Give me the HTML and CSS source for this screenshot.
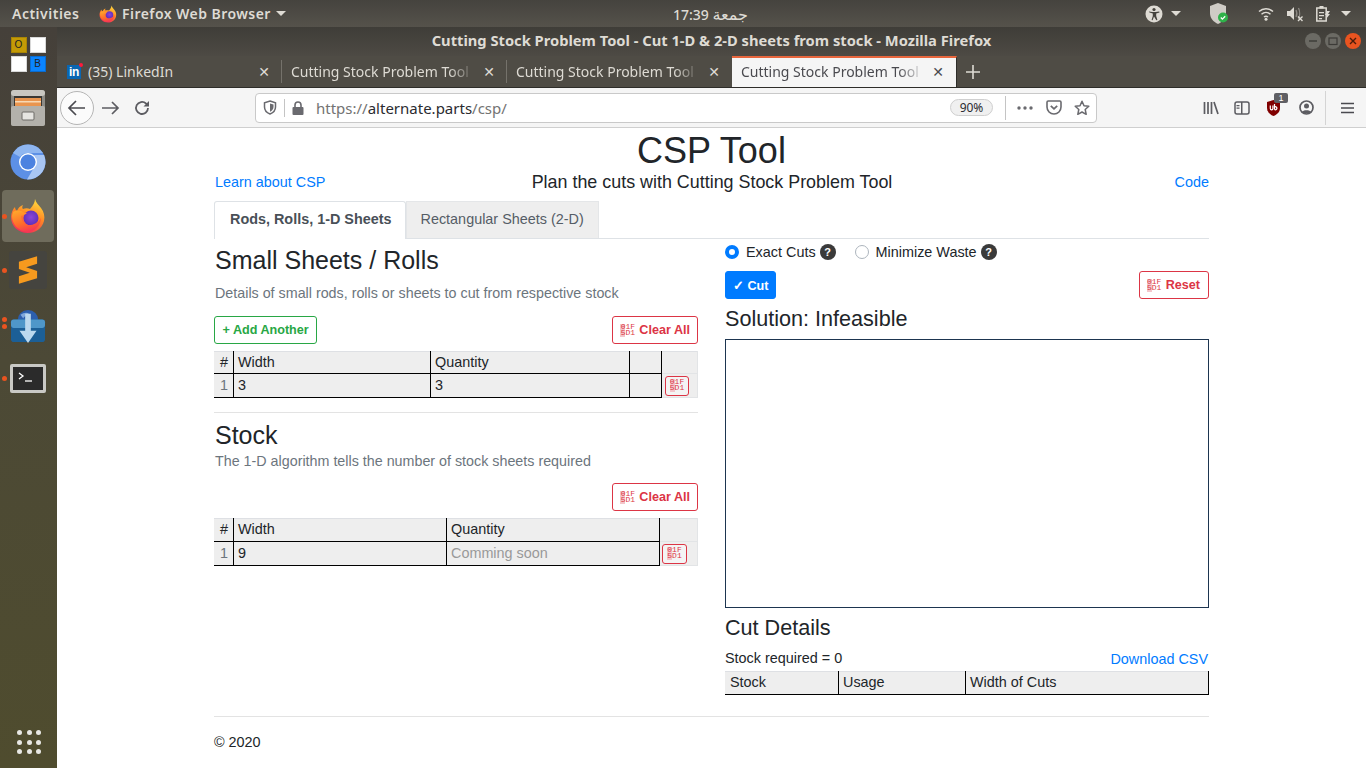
FILE: index.html
```html
<!DOCTYPE html>
<html lang="en">
<head>
  <meta charset="UTF-8" />
  <title>CSP Tool</title>
  <link rel="stylesheet" href="styles.css">
</head>
<body>
  <svg class="defs" width="0" height="0">
    <defs>
      <linearGradient id="foxOuter" x1="0.7" y1="0" x2="0.3" y2="1">
        <stop offset="0" stop-color="#ffdc3e"/>
        <stop offset="0.45" stop-color="#ff8a24"/>
        <stop offset="1" stop-color="#f0285a"/>
      </linearGradient>
      <linearGradient id="foxHead" x1="0.2" y1="0" x2="0.6" y2="1">
        <stop offset="0" stop-color="#ffa62b"/>
        <stop offset="0.6" stop-color="#ff6a2a"/>
        <stop offset="1" stop-color="#f5315a"/>
      </linearGradient>
      <radialGradient id="foxInner" cx="0.5" cy="0.45" r="0.6">
        <stop offset="0" stop-color="#8a45d8"/>
        <stop offset="1" stop-color="#5a2db5"/>
      </radialGradient>
      <symbol id="firefox" viewBox="0 0 36 36">
        <path fill="url(#foxOuter)" d="M25 1c1 4 4 6 6 9 3 4 4 8 3 13-2 8-9 12-16 12C8 35 1 28 1 19c0-4 2-8 4-10 0 2 1 3 2 4 1-3 3-5 6-6-1 2-1 3 0 4 2-1 5-1 7 0 3-3 5-7 5-10z"/>
        <circle cx="21" cy="20" r="7.500" fill="url(#foxInner)"/>
        <path fill="url(#foxHead)" d="M3 14c3-2 7-2 10 0 1 1 3 1 4 1-2 2-5 2-6 3 0 3 2 7 6 9 5 1 11-2 14-7 0 8-7 14-14 14C8 33 2 26 2 18c0-1 1-3 1-4z"/>
      </symbol>
    </defs>
  </svg>

  <header class="topbar">
    <div class="topbar-left">
      <span class="activities">Activities</span>
      <svg class="top-fox" width="18" height="18"><use href="#firefox"/></svg>
      <span class="app-name">Firefox Web Browser</span>
      <span class="caret"></span>
    </div>
    <div class="clock">17:39 <span class="clock-day">جمعة</span></div>
    <div class="topbar-right">
      <svg class="tray-a11y" width="18" height="18" viewBox="0 0 18 18">
        <circle cx="9" cy="9" r="8.500" fill="#dedbd4"/>
        <circle cx="9" cy="4.500" r="1.600" fill="#45433d"/>
        <path fill="#45433d" d="M3.800 6.400l3.400.7h3.600l3.400-.7.3 1-3.300 1v2.500l1.200 4-1 .3L9 11.500l-1.400 3.700-1-.3 1.200-4V8.400l-3.300-1z"/>
      </svg>
      <span class="caret tray-caret1"></span>
      <svg class="tray-shield" width="20" height="24" viewBox="0 0 20 24">
        <path fill="#cfccc6" d="M9 1l8 3v7c0 6-4 9-8 11-4-2-8-5-8-11V4z"/>
        <circle cx="14" cy="15.500" r="5" fill="#2fb24a"/>
        <path fill="none" stroke="#fff" stroke-width="1.300" d="M11.800 15.500l1.600 1.600 2.800-2.800"/>
      </svg>
      <svg class="tray-wifi" width="16" height="14" viewBox="0 0 16 14">
        <path fill="none" stroke="#dedbd4" stroke-width="1.500" d="M1 4.500c4-3.600 10-3.600 14 0M3.500 7.300c2.600-2.300 6.400-2.300 9 0M6 10c1.200-1 2.800-1 4 0"/>
        <circle cx="8" cy="12.300" r="1.500" fill="#dedbd4"/>
      </svg>
      <svg class="tray-vol" width="18" height="16" viewBox="0 0 18 16">
        <path fill="#dedbd4" d="M1 5h3l4-4v13L4 10H1z"/>
        <path fill="none" stroke="#8d8a84" stroke-width="1.300" d="M10 4c1 2 1 5 0 7M12.500 2c1.500 3 1.500 8 0 11"/>
        <path fill="none" stroke="#dedbd4" stroke-width="1.400" d="M12 10.500l4.500 4.500M16.500 10.500L12 15"/>
      </svg>
      <svg class="tray-power" width="16" height="18" viewBox="0 0 16 18">
        <path fill="none" stroke="#dedbd4" stroke-width="1.500" d="M1.800 3h9.400v13H1.800z"/>
        <path fill="#dedbd4" d="M4.500 1h4v2.500h-4zM4 7h5v1.300H4zM4 10h5v1.300H4zM4 13h3v1.300H4z"/>
        <path fill="#dedbd4" d="M12 6l3 0-2 3h2l-4 5 1-4H10z"/>
      </svg>
      <span class="caret tray-caret2"></span>
    </div>
  </header>

  <div class="desktop">
    <aside class="dock">
      <div class="dock-item">
        <div class="ob-grid">
          <span class="ob-cell ob-yellow">O</span>
          <span class="ob-cell"></span>
          <span class="ob-cell"></span>
          <span class="ob-cell ob-blue">B</span>
        </div>
      </div>
      <div class="dock-item">
        <svg width="34" height="36" viewBox="0 0 34 36">
          <rect x="0" y="0" width="34" height="36" rx="3" fill="#8d8b85"/>
          <rect x="0" y="0" width="34" height="6" rx="3" fill="#c9c7c1"/>
          <rect x="3" y="6" width="28" height="10" fill="#3a3834"/>
          <rect x="4" y="8" width="26" height="8" fill="#e9954f"/>
          <rect x="4" y="11" width="26" height="1.500" fill="#f7d9b5"/>
          <rect x="0" y="16" width="34" height="20" rx="2" fill="#b3b1ab"/>
          <rect x="11" y="22" width="12" height="8" rx="1" fill="#e6e5e1" stroke="#6d6b66"/>
        </svg>
      </div>
      <div class="dock-item">
        <svg width="36" height="36" viewBox="0 0 36 36">
          <circle cx="18" cy="18" r="17.500" fill="#5d90e6"/>
          <path fill="#8fb6f0" d="M3 9a17.500 17.500 0 0 1 30 0H18a9 9 0 0 0-8 4z"/>
          <path fill="#a9c6f3" d="M34 11a17.500 17.500 0 0 1-17 24.500l7-12a9 9 0 0 0 0-12.500z"/>
          <circle cx="18" cy="18" r="9" fill="#fff"/>
          <circle cx="18" cy="18" r="7.600" fill="#4c82e0"/>
        </svg>
      </div>
      <div class="dock-item dock-active">
        <span class="run-dot"></span>
        <svg width="36" height="36"><use href="#firefox"/></svg>
      </div>
      <div class="dock-item">
        <span class="run-dot"></span>
        <div class="sublime">
          <svg width="20" height="28" viewBox="0 0 22 30">
            <path fill="#f79a1e" d="M21 0v8L9 12l12 4v8L1 30v-8l12-4L1 14V6z"/>
          </svg>
        </div>
      </div>
      <div class="dock-item">
        <span class="run-dot run-dot-top"></span>
        <span class="run-dot run-dot-low"></span>
        <svg class="dl-icon" width="36" height="34" viewBox="0 0 38 36">
          <circle cx="19" cy="11" r="11" fill="#2c5fae"/>
          <path fill="#7fa8dc" d="M11 5c3-2 7-3 9-1-1 2-5 2-6 5z"/>
          <rect x="1" y="10" width="36" height="24" rx="3" fill="#1c5f96"/>
          <rect x="1" y="10" width="36" height="9" rx="3" fill="#4f97c9"/>
          <path fill="#bcd9ee" d="M16 4h6v18h6l-9 13-9-13h6z"/>
        </svg>
      </div>
      <div class="dock-item">
        <span class="run-dot"></span>
        <div class="term">
          <div class="term-screen">
            <svg width="20" height="12" viewBox="0 0 20 12">
              <path fill="none" stroke="#fff" stroke-width="1.300" d="M1 1l4 3-4 3"/>
              <path stroke="#fff" stroke-width="1.300" d="M7 9h7"/>
            </svg>
          </div>
        </div>
      </div>
      <div class="apps-grid">
        <i></i><i></i><i></i><i></i><i></i><i></i><i></i><i></i><i></i>
      </div>
    </aside>

    <div class="window">
      <div class="titlebar">
        <span class="title">Cutting Stock Problem Tool - Cut 1-D &amp; 2-D sheets from stock - Mozilla Firefox</span>
        <div class="win-controls">
          <span class="win-btn"><svg width="10" height="10" viewBox="0 0 10 10"><path stroke="#3c3b37" stroke-width="1.400" d="M1 5h8"/></svg></span>
          <span class="win-btn"><svg width="10" height="10" viewBox="0 0 10 10"><rect x="1" y="2" width="8" height="6.500" fill="none" stroke="#3c3b37" stroke-width="1.200"/></svg></span>
          <span class="win-btn win-close"><svg width="10" height="10" viewBox="0 0 10 10"><path stroke="#4a1c0a" stroke-width="1.400" d="M2 2l6 6M8 2L2 8"/></svg></span>
        </div>
      </div>

      <div class="tabbar">
        <div class="tab">
          <span class="favicon">in</span>
          <span class="tab-label">(35) LinkedIn</span>
          <span class="tab-x">✕</span>
        </div>
        <div class="tab">
          <span class="tab-label tab-fade">Cutting Stock Problem Tool</span>
          <span class="tab-x">✕</span>
        </div>
        <div class="tab">
          <span class="tab-label tab-fade">Cutting Stock Problem Tool</span>
          <span class="tab-x">✕</span>
        </div>
        <div class="tab tab-active">
          <span class="tab-label tab-fade">Cutting Stock Problem Tool</span>
          <span class="tab-x">✕</span>
        </div>
        <svg class="new-tab" width="16" height="16" viewBox="0 0 16 16"><path stroke="#dedbd4" stroke-width="1.600" d="M8 1v14M1 8h14"/></svg>
      </div>

      <div class="navbar">
        <span class="back-btn">
          <svg width="20" height="18" viewBox="0 0 20 18"><path fill="none" stroke="#4a4a4f" stroke-width="1.700" d="M18 9H2M9 2L2 9l7 7"/></svg>
        </span>
        <svg class="nav-forward" width="18" height="16" viewBox="0 0 18 16"><path fill="none" stroke="#5c5c61" stroke-width="1.700" d="M0 8h16M10 2l6 6-6 6"/></svg>
        <svg class="nav-reload" width="16" height="16" viewBox="0 0 16 16"><path fill="none" stroke="#5c5c61" stroke-width="1.800" d="M14 8a6 6 0 1 1-2-4.500L14 5"/><path fill="#5c5c61" d="M15 1v5.500H9.500z"/></svg>
        <div class="urlbar">
          <svg class="url-shield" width="14" height="15" viewBox="0 0 14 15"><path fill="none" stroke="#6a6a6f" stroke-width="1.500" d="M7 1l5.500 1.800V7c0 3.500-2.500 5.800-5.500 7C4 12.800 1.500 10.500 1.500 7V2.800z"/><path fill="#6a6a6f" d="M7 3.500l3.500 1V7c0 2.300-1.500 3.700-3.500 4.800z"/></svg>
          <span class="url-sep"></span>
          <svg class="url-lock" width="12" height="14" viewBox="0 0 12 14"><path fill="none" stroke="#6a6a6f" stroke-width="1.600" d="M3 6.500V4a3 3 0 0 1 6 0v2.500"/><rect x="0.500" y="6" width="11" height="8" rx="1" fill="#6a6a6f"/></svg>
          <span class="url-text"><span class="url-dim">https://</span>alternate.parts<span class="url-dim">/csp/</span></span>
          <span class="zoom-pill">90%</span>
          <span class="url-sep url-sep-right"></span>
          <svg class="url-dots" width="16" height="4" viewBox="0 0 16 4"><circle cx="2" cy="2" r="1.700" fill="#6a6a6f"/><circle cx="8" cy="2" r="1.700" fill="#6a6a6f"/><circle cx="14" cy="2" r="1.700" fill="#6a6a6f"/></svg>
          <svg class="url-pocket" width="16" height="15" viewBox="0 0 16 15"><path fill="none" stroke="#6a6a6f" stroke-width="1.600" d="M2.200 1h11.600c.7 0 1.200.5 1.200 1.200V7a7 7 0 0 1-14 0V2.200C1 1.500 1.500 1 2.200 1z"/><path fill="none" stroke="#6a6a6f" stroke-width="1.800" d="M4.800 5.800L8 8.800l3.200-3"/></svg>
          <svg class="url-star" width="16" height="16" viewBox="0 0 16 16"><path fill="none" stroke="#6a6a6f" stroke-width="1.500" stroke-linejoin="round" d="M8 1.300l2 4.500 4.800.5-3.600 3.200 1 4.800L8 12l-4.200 2.300 1-4.800L1.200 6.300 6 5.800z"/></svg>
        </div>
        <div class="nav-tools">
          <svg class="tool-lib" width="16" height="14" viewBox="0 0 16 14"><path stroke="#5c5c61" stroke-width="1.700" fill="none" d="M1.500 1v12M5 1v12M8.500 1v12M11 1l4 12"/></svg>
          <svg class="tool-side" width="16" height="14" viewBox="0 0 16 14"><rect x="1" y="1" width="14" height="12" rx="2" fill="none" stroke="#5c5c61" stroke-width="1.500"/><path fill="#5c5c61" d="M7 1h1.500v12H7zM2.500 4h3v1.200h-3zM2.500 6.500h3v1.200h-3z"/></svg>
          <span class="ublock">
            <svg width="15" height="16" viewBox="0 0 15 16"><path fill="#800000" d="M7.500 0L14 2v6c0 4-3 6.500-6.500 8C4 14.500 1 12 1 8V2z"/><path fill="none" stroke="#fff" stroke-width="1.200" d="M4.300 5.500v3a1.300 1.300 0 0 0 2.600 0v-3M8.500 4v5.500M8.500 7a1.500 1.500 0 1 1 0 2.500"/></svg>
            <span class="ublock-badge">1</span>
          </span>
          <svg class="tool-acct" width="15" height="15" viewBox="0 0 15 15"><circle cx="7.500" cy="7.500" r="6.500" fill="none" stroke="#5c5c61" stroke-width="1.700"/><circle cx="7.500" cy="6" r="2.500" fill="#5c5c61"/><path fill="#5c5c61" d="M3 12c1-2.500 8-2.500 9 0-2 2-7 2-9 0z"/></svg>
          <span class="tool-sep"></span>
          <svg class="tool-menu" width="13" height="12" viewBox="0 0 13 12"><path stroke="#4a4a4f" stroke-width="1.700" d="M0 1.500h13M0 6h13M0 10.500h13"/></svg>
        </div>
      </div>

      <main class="page">
        <h1 class="page-title">CSP Tool</h1>
        <div class="lead-row">
          <a class="link" href="#">Learn about CSP</a>
          <span class="lead">Plan the cuts with Cutting Stock Problem Tool</span>
          <a class="link link-end" href="#">Code</a>
        </div>

        <nav class="tabs">
          <span class="page-tab page-tab-active">Rods, Rolls, 1-D Sheets</span>
          <span class="page-tab">Rectangular Sheets (2-D)</span>
        </nav>

        <div class="columns">
          <section class="col-left">
            <h3 class="sec-title">Small Sheets / Rolls</h3>
            <p class="muted muted-first">Details of small rods, rolls or sheets to cut from respective stock</p>
            <div class="btn-row">
              <button class="btn btn-green">+ Add Another</button>
              <button class="btn btn-red"><span class="tofu">01F<br>5D1</span>Clear All</button>
            </div>
            <table class="grid grid-small">
              <tr>
                <th class="c-num">#</th><th class="c-w1">Width</th><th class="c-q1">Quantity</th><th class="c-e1"></th><td class="c-del"></td>
              </tr>
              <tr>
                <td class="c-num num-dim">1</td><td>3</td><td>3</td><td></td>
                <td class="c-del"><button class="btn-del"><span class="tofu">01F<br>5D1</span></button></td>
              </tr>
            </table>
            <hr class="rule">
            <h3 class="sec-title stock-title">Stock</h3>
            <p class="muted">The 1-D algorithm tells the number of stock sheets required</p>
            <div class="btn-row btn-row-end">
              <button class="btn btn-red"><span class="tofu">01F<br>5D1</span>Clear All</button>
            </div>
            <table class="grid grid-stock">
              <tr>
                <th class="c-num">#</th><th class="c-w2">Width</th><th class="c-q2">Quantity</th><td class="c-del2"></td>
              </tr>
              <tr>
                <td class="c-num num-dim">1</td><td>9</td><td class="soon">Comming soon</td>
                <td class="c-del2"><button class="btn-del"><span class="tofu">01F<br>5D1</span></button></td>
              </tr>
            </table>
          </section>

          <section class="col-right">
            <div class="modes">
              <label class="mode"><span class="radio radio-on"></span>Exact Cuts<span class="help">?</span></label>
              <label class="mode"><span class="radio"></span>Minimize Waste<span class="help">?</span></label>
            </div>
            <div class="btn-row btn-row-cut">
              <button class="btn btn-blue">✓ Cut</button>
              <button class="btn btn-red"><span class="tofu">01F<br>5D1</span>Reset</button>
            </div>
            <h4 class="sub-title">Solution: Infeasible</h4>
            <div class="solution"></div>
            <h4 class="sub-title details-title">Cut Details</h4>
            <div class="stock-row">
              <span>Stock required = 0</span>
              <a class="link" href="#">Download CSV</a>
            </div>
            <table class="grid grid-cuts">
              <tr><th class="c-s">Stock</th><th class="c-u">Usage</th><th>Width of Cuts</th></tr>
            </table>
          </section>
        </div>

        <footer class="footer">© 2020</footer>
      </main>
    </div>
  </div>
</body>
</html>
```

FILE: styles.css
```css
* {
  box-sizing: border-box;
}

html, body {
  margin: 0;
  height: 768px;
  overflow: hidden;
}

body {
  font-family: "Liberation Sans", Arial, sans-serif;
  font-size: 14.4px;
  color: #212529;
  background: #fff;
}

.defs {
  display: block;
  height: 0;
}

/* gnome top bar */
.topbar {
  height: 27px;
  display: grid;
  grid-template-columns: 1fr auto 1fr;
  align-items: center;
  background: linear-gradient(to bottom, #45433e, #55524b);
  color: #dedbd4;
  font-family: "Noto Sans", sans-serif;
  font-size: 14px;
  font-weight: 600;
}

.topbar-left {
  display: flex;
  align-items: center;
  padding-left: 12px;
}

.activities {
  width: 87px;
  letter-spacing: 0.5px;
}

.top-fox {
  margin-right: 5px;
}

.app-name {
  letter-spacing: 0.45px;
}

.caret {
  display: inline-block;
  width: 0;
  height: 0;
  border-left: 5px solid transparent;
  border-right: 5px solid transparent;
  border-top: 5px solid #dedbd4;
  margin-left: 5px;
}

.clock {
  font-family: "Noto Sans", "DejaVu Sans", sans-serif;
  font-size: 14px;
  font-weight: 500;
  margin-left: 55px;
}

.clock-day {
  font-size: 16px;
}

.topbar-right {
  display: flex;
  align-items: center;
  justify-content: flex-end;
  padding-right: 15px;
}

.tray-caret1 {
  margin-left: 8px;
}

.tray-shield {
  margin-left: 28px;
}

.tray-wifi {
  margin-left: 29px;
}

.tray-vol {
  margin-left: 12px;
}

.tray-power {
  margin-left: 11px;
}

.tray-caret2 {
  margin-left: 10px;
}

/* desktop */
.desktop {
  display: flex;
  height: 741px;
}

.dock {
  width: 57px;
  flex: none;
  display: flex;
  flex-direction: column;
  background: linear-gradient(to bottom, #45403a, #4c4936 45%, #4f4c2e);
}

.dock-item {
  position: relative;
  height: 54px;
  flex: none;
  display: flex;
  align-items: center;
  justify-content: center;
  padding-right: 1px;
}

.dock-active::before {
  content: "";
  position: absolute;
  left: 2px;
  top: 1px;
  width: 52px;
  height: 52px;
  border-radius: 4px;
  background: #6f6c5c;
}

.dock-active svg {
  position: relative;
}

.run-dot {
  position: absolute;
  left: 2px;
  top: 25px;
  width: 5px;
  height: 5px;
  border-radius: 50%;
  background: #e95420;
}

.run-dot-top {
  top: 20px;
}

.run-dot-low {
  top: 27px;
}

.dl-icon {
  margin-top: 6px;
}

.ob-grid {
  display: grid;
  grid-template-columns: 16px 16px;
  grid-template-rows: 16px 16px;
  gap: 3px;
}

.ob-cell {
  background: #fff;
  border: 1px solid #d8d8d8;
  font-size: 10px;
  line-height: 14px;
  text-align: center;
  color: #222;
}

.ob-yellow {
  background: #c49a06;
  border-color: #a98505;
}

.ob-blue {
  background: #0a84ff;
  border-color: #0a6cd0;
}

.sublime {
  width: 38px;
  height: 38px;
  border-radius: 3px;
  background: #45443f;
  display: flex;
  align-items: center;
  justify-content: center;
}

.term {
  width: 36px;
  height: 29px;
  padding: 3px;
  background: #c9c9c5;
  border-radius: 2px;
}

.term-screen {
  height: 100%;
  background: #2b2b2b;
  padding: 5px 0 0 5px;
}

.term-screen svg {
  display: block;
}

.apps-grid {
  margin: auto 0 14px 17px;
  width: 23px;
  display: grid;
  grid-template-columns: repeat(3, 5px);
  gap: 4.500px;
}

.apps-grid i {
  width: 5px;
  height: 5px;
  border-radius: 50%;
  background: #e8e8e4;
}

/* firefox window */
.window {
  flex: 1;
  min-width: 0;
  display: flex;
  flex-direction: column;
}

.titlebar {
  position: relative;
  height: 29px;
  padding-bottom: 3px;
  display: flex;
  align-items: center;
  justify-content: center;
  background: linear-gradient(to bottom, #3f3d38, #4d4a44);
  color: #dedbd4;
  font-family: "Noto Sans", sans-serif;
  font-size: 14.7px;
  font-weight: 700;
}

.win-controls {
  position: absolute;
  right: 5px;
  top: 6px;
  display: flex;
  gap: 4px;
}

.win-btn {
  width: 16px;
  height: 16px;
  border-radius: 50%;
  background: #6b6a64;
  display: flex;
  align-items: center;
  justify-content: center;
}

.win-close {
  background: #e95420;
}

.tabbar {
  height: 31px;
  display: flex;
  align-items: stretch;
  background: #4f4c45;
  color: #dedbd4;
  font-family: "Noto Sans", sans-serif;
  font-size: 14px;
}

.tab {
  width: 225px;
  flex: none;
  display: flex;
  align-items: center;
  padding: 0 10px 0 9px;
  position: relative;
}

.tab + .tab::before {
  content: "";
  position: absolute;
  left: -1px;
  top: 4px;
  bottom: 4px;
  width: 1px;
  background: #75726b;
}

.tab-active {
  background: #f5f5f5;
  color: #4a4a4f;
  border-top: 2px solid #e8663d;
  border-right: 1px solid #2e2d29;
  padding-bottom: 2px;
}

.tab-active::before {
  display: none;
}

.tab-label {
  flex: 1;
  min-width: 0;
  white-space: nowrap;
  overflow: hidden;
}

.tab-fade {
  -webkit-mask-image: linear-gradient(to right, #000 86%, transparent);
  mask-image: linear-gradient(to right, #000 86%, transparent);
}

.tab-x {
  margin-left: 6px;
  font-family: "DejaVu Sans", sans-serif;
  font-size: 14px;
  width: 16px;
  text-align: center;
}

.favicon {
  position: relative;
  width: 14px;
  height: 14px;
  margin: 0 7px 0 1px;
  background: #0a66b2;
  color: #fff;
  font-family: "Liberation Sans", sans-serif;
  font-size: 12px;
  font-weight: 700;
  line-height: 15px;
  text-align: center;
  letter-spacing: -0.3px;
}

.favicon::after {
  content: "";
  position: absolute;
  right: -2px;
  top: -2px;
  width: 4px;
  height: 4px;
  border-radius: 50%;
  background: #ff1a3c;
}

.new-tab {
  align-self: center;
  margin-left: 8px;
}

.navbar {
  height: 41px;
  display: flex;
  align-items: center;
  background: #f5f5f5;
  border-top: 1px solid #2e2d29;
  border-bottom: 1px solid #cfcfcf;
  padding-left: 3px;
}

.back-btn {
  width: 34px;
  height: 34px;
  border-radius: 50%;
  border: 1px solid #b5b5b5;
  background: #fbfbfb;
  display: flex;
  align-items: center;
  justify-content: center;
  flex: none;
}

.nav-forward {
  margin-left: 8px;
  flex: none;
}

.nav-reload {
  margin-left: 14px;
  flex: none;
}

.urlbar {
  width: 842px;
  height: 30px;
  margin-left: 105px;
  flex: none;
  display: flex;
  align-items: center;
  background: #fff;
  border: 1px solid #c9c9c9;
  border-radius: 4px;
  padding-left: 7px;
  font-family: "Noto Sans", sans-serif;
  font-size: 15px;
  color: #2b2b30;
}

.url-shield {
  flex: none;
}

.url-sep {
  width: 1px;
  height: 18px;
  margin-left: 7px;
  background: #c4c4c4;
}

.url-lock {
  margin-left: 7px;
}

.url-text {
  margin-left: 12px;
  flex: 1;
}

.url-dim {
  color: #737373;
}

.zoom-pill {
  width: 43px;
  height: 17px;
  border: 1px solid #cfcfcf;
  border-radius: 9px;
  background: #f0f0f0;
  font-size: 12px;
  line-height: 15px;
  text-align: center;
}

.url-sep-right {
  height: 24px;
  margin-left: 12px;
}

.url-dots {
  margin-left: 11px;
}

.url-pocket {
  margin-left: 13px;
}

.url-star {
  margin-left: 12px;
  margin-right: 6px;
}

.nav-tools {
  display: flex;
  align-items: center;
  margin-left: 106px;
}

.tool-side {
  margin-left: 15px;
}

.ublock {
  position: relative;
  margin-left: 16px;
  display: flex;
}

.ublock-badge {
  position: absolute;
  left: 8px;
  top: -7px;
  width: 14px;
  height: 10px;
  border-radius: 2px;
  background: #5f5f64;
  color: #fff;
  font-size: 9px;
  line-height: 10px;
  text-align: center;
}

.tool-acct {
  margin-left: 18px;
}

.tool-sep {
  width: 1px;
  height: 34px;
  margin-left: 11px;
  background: #d4d4d4;
}

.tool-menu {
  margin-left: 15px;
}

/* the page */
.page {
  flex: 1;
  width: 995px;
  margin-left: 157px;
}

.page-title {
  margin: 1px 0 0;
  font-size: 36px;
  font-weight: 400;
  line-height: 43px;
  text-align: center;
}

.lead-row {
  display: grid;
  grid-template-columns: 1fr auto 1fr;
  align-items: center;
  height: 21px;
  line-height: 19px;
  padding-left: 1px;
}

.link {
  color: #007bff;
  text-decoration: none;
}

.link-end {
  text-align: right;
}

.lead {
  font-size: 17.9px;
}

.tabs {
  display: flex;
  height: 38px;
  margin-top: 8px;
  border-bottom: 1px solid #dee2e6;
}

.page-tab {
  height: 37px;
  padding: 0 14px;
  line-height: 34px;
  color: #555d66;
  background: #eee;
  border: 1px solid #e4e6e8;
  border-bottom: none;
}

.page-tab-active {
  height: 38px;
  padding: 0 13px 0 15px;
  background: #fff;
  color: #495057;
  font-weight: 700;
  border-color: #dee2e6;
  border-radius: 3px 3px 0 0;
}

.columns {
  display: grid;
  grid-template-columns: 484px 484px;
  column-gap: 27px;
}

.sec-title {
  margin: 3px 0 0;
  padding-left: 1px;
  font-size: 25px;
  font-weight: 400;
  line-height: 36px;
}

.muted {
  margin: 0;
  padding-left: 1px;
  color: #6c757d;
  font-size: 14.3px;
  line-height: 21px;
}

.muted-first {
  margin-top: 5px;
}

.btn-row {
  display: flex;
  justify-content: space-between;
  margin-top: 12px;
  margin-bottom: 7px;
}

.btn-row-end {
  justify-content: flex-end;
  margin-top: 11px;
}

.btn {
  height: 28px;
  padding: 0 7px;
  font-family: "Liberation Sans", sans-serif;
  font-size: 12.6px;
  font-weight: 700;
  border-radius: 3px;
  border: 1px solid;
  background: #fff;
  display: inline-flex;
  align-items: center;
}

.btn-green {
  color: #28a745;
  border-color: #28a745;
  padding: 0 7.500px;
}

.btn-red {
  color: #dc3545;
  border-color: #dc3545;
}

.btn-blue {
  color: #fff;
  background: #007bff;
  border-color: #007bff;
}

.tofu {
  display: inline-block;
  width: 15px;
  margin-right: 4px;
  font-family: "Liberation Mono", monospace;
  font-size: 8px;
  font-weight: 400;
  line-height: 6.500px;
  text-align: center;
  background: linear-gradient(to right, #f3c6cb 5px, transparent 5px);
}

.grid {
  width: 484px;
  border-collapse: collapse;
  table-layout: fixed;
  background: #eee;
}

.grid th,
.grid td {
  height: 24px;
  padding: 0 4px 1px;
  font-weight: 400;
  text-align: left;
  border: 1px solid #000;
  line-height: 21px;
}

.grid tr:first-child th,
.grid tr:first-child td {
  height: 23px;
  border-top-color: #dee0e4;
}

.grid-small tr:first-child th,
.grid-small tr:first-child td {
  height: 22px;
  line-height: 20px;
}

.grid th:first-child,
.grid td:first-child {
  border-left-color: #eee;
}

.grid .c-del,
.grid .c-del2 {
  padding: 0;
  border: 1px solid #e2e4e6;
  border-left: 1px solid #000;
  text-align: center;
}

.grid .c-num {
  padding: 0 0 1px;
  text-align: center;
}

.num-dim {
  color: #6c757d;
}

.soon {
  color: #999;
}

.c-num { width: 19px; }
.c-w1 { width: 198px; }
.c-q1 { width: 199px; }
.c-e1 { width: 32px; }
.c-w2 { width: 213px; }
.c-q2 { width: 214px; }
.c-del { width: 36px; }
.c-del2 { width: 38px; }
.c-s { width: 113px; }
.c-u { width: 127px; }

.grid-small .c-w1 {
  width: 197px;
}

.grid-stock .c-q2 {
  width: 213px;
}

.btn-del {
  width: 24px;
  height: 20px;
  padding: 0;
  border: 1px solid #dc3545;
  border-radius: 3px;
  background: #f4f4f4;
  color: #dc3545;
  display: block;
  margin-left: 3px;
}

.btn-del .tofu {
  margin: 0;
}

.rule {
  margin: 14px 0 0;
  border: 0;
  border-top: 1px solid #e3e3e3;
}

.stock-title {
  margin-top: 6px;
  line-height: 32px;
}

.c-del2 .btn-del {
  width: 25px;
  margin-left: 2px;
}

.modes {
  display: flex;
  height: 26px;
  align-items: center;
  gap: 19px;
}

.mode {
  display: flex;
  align-items: center;
}

.radio {
  width: 14px;
  height: 14px;
  margin-right: 7px;
  border-radius: 50%;
  border: 1px solid #adb5bd;
  background: #fff;
}

.radio-on {
  border: 4px solid #007bff;
}

.help {
  width: 16px;
  height: 16px;
  margin-left: 4px;
  border-radius: 50%;
  background: #3a3a3a;
  color: #fff;
  font-size: 11px;
  font-weight: 700;
  line-height: 16px;
  text-align: center;
}

.btn-row-cut {
  margin-top: 6px;
  margin-bottom: 0;
}

.btn-row-cut .btn-red {
  padding-right: 8px;
}

.sub-title {
  margin: 5px 0 0;
  font-size: 21.6px;
  font-weight: 400;
  line-height: 30px;
}

.solution {
  height: 269px;
  margin-top: 5px;
  border: 1px solid #1d3550;
}

.details-title {
  margin-top: 5px;
}

.stock-row {
  display: flex;
  justify-content: space-between;
  margin-top: 4px;
  height: 20px;
  padding-right: 1px;
  line-height: 22px;
}

.stock-row .link {
  padding-top: 1px;
}

.grid-cuts {
  margin-top: 4px;
}

.grid-cuts th:first-child {
  border-left-color: #eee;
}

.footer {
  margin-top: 21px;
  border-top: 1px solid #e3e3e3;
  padding-top: 15px;
  line-height: 20px;
}
```
